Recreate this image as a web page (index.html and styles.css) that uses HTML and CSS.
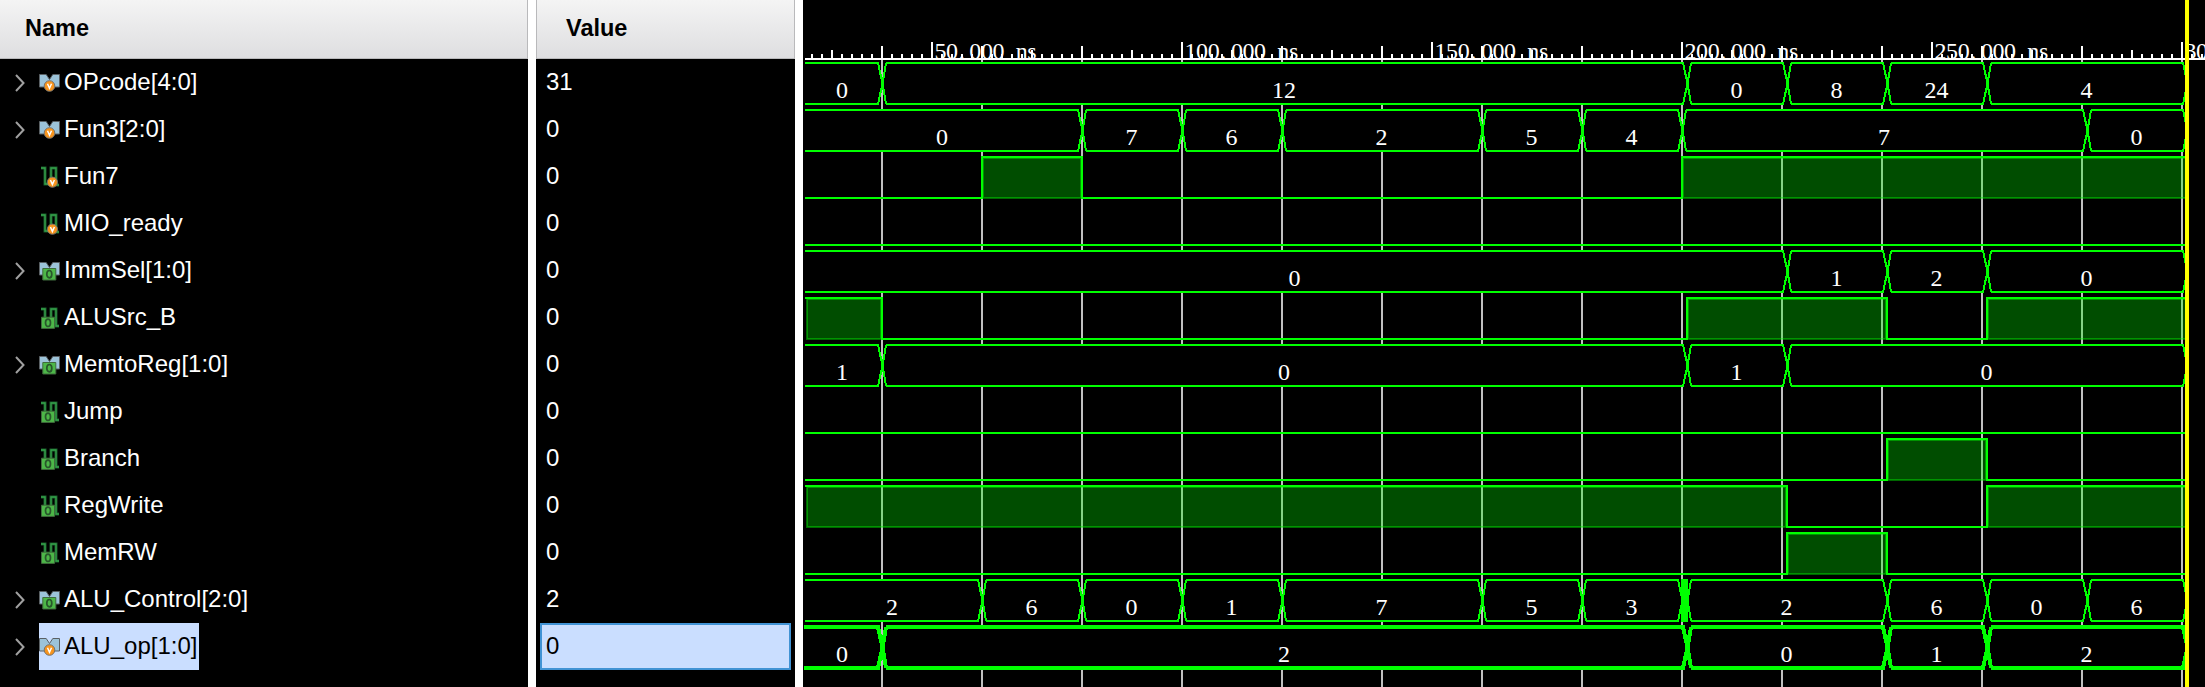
FILE: index.html
```
<!DOCTYPE html>
<html lang="en">
<head>
<meta charset="utf-8">
<title>Waveform viewer</title>
<link rel="stylesheet" href="styles.css">
</head>
<body>
<svg class="defs" width="0" height="0">
  <symbol id="chevron" viewBox="0 0 12 20"><path d="M2 2 9.5 10 2 18" fill="none" stroke="#a0a0a0" stroke-width="2"/></symbol>
  <symbol id="bus" viewBox="0 0 22 22"><path d="M.5 2.5h6.7l3.3 5 3.3-5h6.7v12.5H.5z" fill="#9cc3d9" stroke="#5a6064"/></symbol>
  <symbol id="pulse" viewBox="0 0 22 22"><path d="M2 2h4v16h6V2h5v17h3" fill="none" stroke="#1b5c2a" stroke-width="3"/><path d="M2 2h4v16h6V2h5v17h3" fill="none" stroke="#35a14b" stroke-width="1.3"/></symbol>
  <symbol id="bus-in" viewBox="0 0 22 22"><use href="#bus"/><circle cx="10.5" cy="14" r="5.3" fill="#f7941d" stroke="#77736c"/><path d="m8.5 11.8 2 4.4 2-4.4" fill="none" stroke="#fff" stroke-width="1.5"/></symbol>
  <symbol id="bus-out" viewBox="0 0 22 22"><use href="#bus"/><path d="M3.8 8.5h13v11.5h-13z" fill="#4db748" stroke="#3f6b3c"/><ellipse cx="10.3" cy="14.2" rx="2.5" ry="3.7" fill="none" stroke="#28562b" stroke-width="1.7"/></symbol>
  <symbol id="bit-in" viewBox="0 0 22 22"><use href="#pulse"/><circle cx="13.4" cy="16.2" r="5.1" fill="#f7941d" stroke="#77736c"/><path d="m11.4 14 2 4.4 2-4.4" fill="none" stroke="#fff" stroke-width="1.5"/></symbol>
  <symbol id="bit-out" viewBox="0 0 22 22"><use href="#pulse"/><path d="M2.5 10.2h13v11.2h-13z" fill="#4db748" stroke="#3f6b3c"/><ellipse cx="9" cy="15.8" rx="2.5" ry="3.7" fill="none" stroke="#28562b" stroke-width="1.7"/></symbol>
</svg>
<main class="viewer">
  <section class="panel names">
    <header class="head"><span class="title">Name</span></header>
    <ul class="rows" id="names"></ul>
  </section>
  <section class="panel values">
    <header class="head"><span class="title">Value</span></header>
    <ul class="rows" id="values"></ul>
  </section>
  <section class="waves">
    <svg id="wave" width="1402" height="687" viewBox="803 0 1402 687"></svg>
  </section>
</main>
<script src="waves.js"></script>
</body>
</html>
```

FILE: styles.css
```
* { box-sizing: border-box; }
body { margin: 0; background: #fff; font-family: "Liberation Sans", Arial, sans-serif; overflow: hidden; }
.defs { display: block; }
.viewer { display: flex; gap: 8px; width: 2205px; height: 687px; }
.panel { background: #000; flex: none; }
.names { width: 528px; }
.values { width: 259px; }
.waves { flex: 1; background: #000; }
.waves svg { display: block; }
.head { height: 59px; display: flex; align-items: center; background: linear-gradient(#f4f4f4, #dedee0); border-right: 1px solid #b9b9bb; border-bottom: 1px solid #b9b9bb; }
.values .head { border-left: 1px solid #b9b9bb; }
.title { font-size: 23.5px; font-weight: bold; color: #000; line-height: 28px; }
.names .title { margin: 0 0 3px 25px; }
.values .title { margin: 0 0 3px 29px; }
.rows { list-style: none; margin: 0; padding: 0; }
.rows li { height: 47px; display: flex; align-items: center; font-size: 24px; color: #fff; white-space: pre; }
.names li { padding-left: 14px; }
.chevron { width: 12px; height: 20px; margin-right: 13px; flex: none; }
.blank { width: 12px; margin-right: 13px; flex: none; }
.signal { height: 47px; display: flex; align-items: center; }
.label { line-height: 43px; padding-bottom: 2px; }
.icon { width: 22px; height: 22px; margin-right: 3px; flex: none; }
.values li { padding: 0 0 0 10px; }
.names .selected .signal { background: #cadeff; color: #000; width: 160px; }
.values li.selected { background: #cadeff; color: #000; border: 2px solid #4193d4; margin: 0 4px; padding-left: 4px; }
.crisp { shape-rendering: crispEdges; }
.grid { stroke: #c0c0c0; stroke-width: 2; }
.axis { stroke: #fff; stroke-width: 2; }
.line { fill: none; stroke: #0f0; stroke-width: 2; }
.body { fill: #000; }
.high { fill: #0f0; fill-opacity: .3; stroke: #0f0; stroke-opacity: .4; stroke-width: 2; }
.bold { stroke-width: 4; }
.glitch { fill: #0f0; }
.cursor { fill: #ff0; }
.num { fill: #fff; font-family: "Liberation Serif", "Times New Roman", serif; font-size: 24px; }
.mid { text-anchor: middle; }
```

FILE: waves.js
```
const END = 2187, START = 805;
const signals = [
  { name: 'OPcode[4:0]', value: '31', icon: 'bus-in', bus: [['0', 882], ['12', 1687], ['0', 1787], ['8', 1887], ['24', 1987], ['4', END]] },
  { name: 'Fun3[2:0]', value: '0', icon: 'bus-in', bus: [['0', 1082], ['7', 1182], ['6', 1282], ['2', 1482], ['5', 1582], ['4', 1682], ['7', 2087], ['0', END]] },
  { name: 'Fun7', value: '0', icon: 'bit-in', high: [[982, 1082], [1682, END]] },
  { name: 'MIO_ready', value: '0', icon: 'bit-in', high: [] },
  { name: 'ImmSel[1:0]', value: '0', icon: 'bus-out', bus: [['0', 1787], ['1', 1887], ['2', 1987], ['0', END]] },
  { name: 'ALUSrc_B', value: '0', icon: 'bit-out', high: [[START, 882], [1687, 1887], [1987, END]] },
  { name: 'MemtoReg[1:0]', value: '0', icon: 'bus-out', bus: [['1', 882], ['0', 1687], ['1', 1787], ['0', END]] },
  { name: 'Jump', value: '0', icon: 'bit-out', high: [] },
  { name: 'Branch', value: '0', icon: 'bit-out', high: [[1887, 1987]] },
  { name: 'RegWrite', value: '0', icon: 'bit-out', high: [[START, 1787], [1987, END]] },
  { name: 'MemRW', value: '0', icon: 'bit-out', high: [[1787, 1887]] },
  { name: 'ALU_Control[2:0]', value: '2', icon: 'bus-out', glitch: [1681, 1688], bus: [['2', 982], ['6', 1082], ['0', 1182], ['1', 1282], ['7', 1482], ['5', 1582], ['3', 1682], ['', 1687], ['2', 1887], ['6', 1987], ['0', 2087], ['6', END]] },
  { name: 'ALU_op[1:0]', value: '0', icon: 'bus-in', selected: true, bus: [['0', 882], ['2', 1687], ['0', 1887], ['1', 1987], ['2', END]] }
];

document.getElementById('names').innerHTML = signals.map(s =>
  `<li class="${s.selected ? 'selected' : ''}">` +
  (s.bus ? '<svg class="chevron"><use href="#chevron"/></svg>' : '<span class="blank"></span>') +
  `<span class="signal"><svg class="icon"><use href="#${s.icon}"/></svg><span class="label">${s.name}</span></span></li>`).join('');
document.getElementById('values').innerHTML = signals.map(s =>
  `<li class="${s.selected ? 'selected' : ''}"><span class="label">${s.value}</span></li>`).join('');

let out = '';
const path = (cls, d) => { out += `<path class="crisp ${cls}" d="${d}"/>`; };

// vertical time grid, one line every 20 ns
for (let x = 882; x < END; x += 100) path('grid', `M${x} 59V687`);

signals.forEach((s, row) => {
  const top = 63 + row * 47, bottom = top + 41, mid = (top + bottom) / 2;
  const bold = s.selected ? ' bold' : '';
  const first = s.selected ? 804 : START;
  if (s.bus) {
    let from = null, marks = '';
    s.bus.forEach(([label, to]) => {
      const a = from === null ? first : from, l = from === null ? first : from + 4, r = to - 4;
      if (label) {
        path('body', `M${a} ${from === null ? top : mid}L${l} ${top}H${r}L${to} ${mid}L${r} ${bottom}H${l}${from === null ? '' : `L${a} ${mid}`}Z`);
        marks += `M${l} ${top}H${r}L${to + .5} ${mid}M${l} ${bottom}H${r}L${to + .5} ${mid}`;
        if (from !== null) marks += `M${l} ${top}L${a + .5} ${mid}L${l} ${bottom}`;
        const cx = ((from === null ? 803 : from) + to) / 2 - .5;
        out += `<text class="num mid" x="${cx}" y="${bottom - 6}">${label}</text>`;
      }
      from = to;
    });
    path('line' + bold, marks);
    if (s.glitch) out += `<rect class="glitch" x="${s.glitch[0]}" y="${top - 1}" width="${s.glitch[1] - s.glitch[0]}" height="43"/>`;
  } else {
    let x = START, d = '';
    s.high.forEach(([a, b]) => {
      const left = a === START ? a + 2 : a + 1;
      path('high', `M${left} ${top + 1}H${b - 1}V${bottom}H${left}Z`);
      d += a === START ? `M${a} ${top}` : `M${x} ${bottom}H${a}M${a} ${bottom + 1}V${top}M${a - 1} ${top}`;
      d += b === END ? `H${b}` : `H${b + 1}M${b} ${top}V${bottom + 1}`;
      x = b;
    });
    if (x !== END) d += `M${x} ${bottom}H${END}`;
    path('line', d);
  }
});

// ruler ticks, one every 2 ns
for (let x = 812; x < 2205; x += 10) {
  const ns = (x - 682) / 5;
  const y = ns % 50 === 0 ? 42 : ns % 20 === 0 ? 46 : ns % 10 === 0 ? 50 : 54;
  path('axis', `M${x} ${y}V59`);
}
path('axis', `M${START} 59H2205`);

// fixed-pitch ruler labels
for (let ns = 50; ns <= 300; ns += 50) {
  const text = `${ns}.000 ns`, x = 682 + ns * 5 + 2.5;
  const xs = [...text].map((c, i) => x + i * 11.6 + (c === '.' ? 1 : 0)).join(' ');
  out += `<text class="num" y="59" x="${xs}">${text}</text>`;
}
out += '<rect class="cursor" x="2185" y="0" width="4" height="687"/>';
document.getElementById('wave').innerHTML = out;
```
